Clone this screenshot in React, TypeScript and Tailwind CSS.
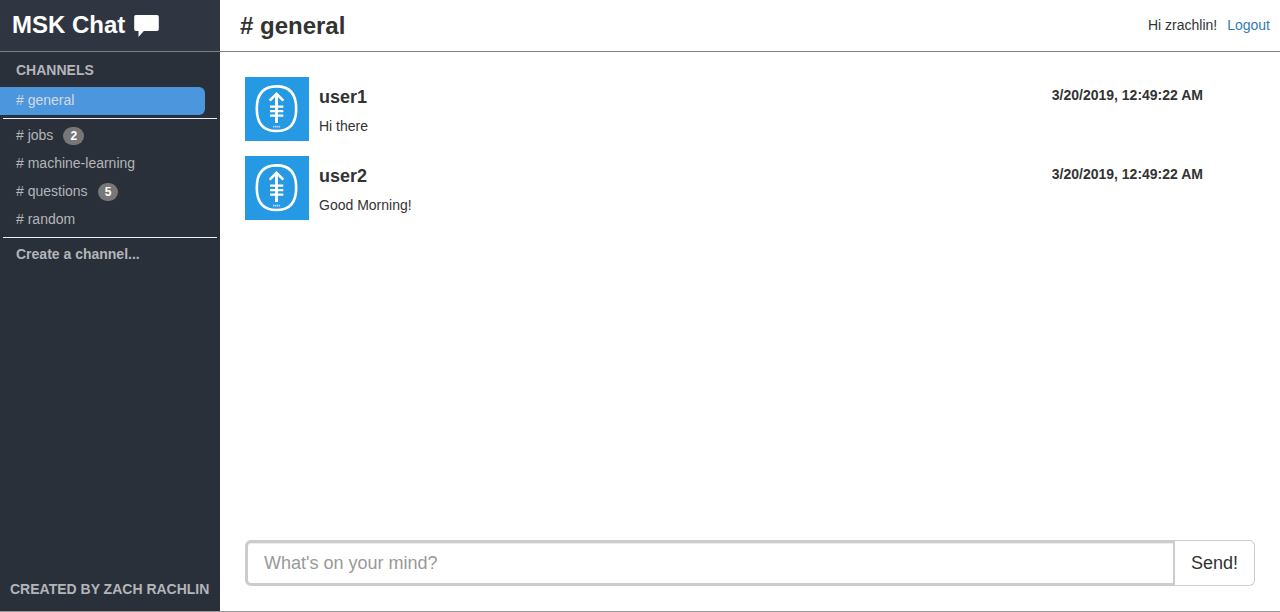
import React from "react";

type Channel = { name: string; unread?: number };
type Message = { user: string; text: string; time: string };

const channels: Channel[] = [
  { name: "jobs", unread: 2 },
  { name: "machine-learning" },
  { name: "questions", unread: 5 },
  { name: "random" },
];

const messages: Message[] = [
  { user: "user1", text: "Hi there", time: "3/20/2019, 12:49:22 AM" },
  { user: "user2", text: "Good Morning!", time: "3/20/2019, 12:49:22 AM" },
];

function Avatar() {
  return (
    <svg viewBox="0 0 64 64" className="size-16 shrink-0 bg-[#2699e4]" aria-hidden="true">
      <g fill="none" stroke="#fff" strokeWidth="2.6">
        <path d="M31.5 9.4C45 9.4 51.2 17 51.2 31.7S45 54 31.5 54 11.8 46.4 11.8 31.7 18 9.4 31.5 9.4Z" />
        <path d="M31.5 17V46" strokeWidth="2.9" />
        <path d="M24.7 23.6L31.5 16.8L38.3 23.6" strokeWidth="2.6" />
        <path d="M25 29.6H38.3M25 34.1H38.3M25 38.6H38.3" strokeWidth="2.1" />
      </g>
      <path d="M28 49.7H35.5" stroke="#b5dcf6" strokeWidth="1.8" strokeDasharray="1.4 0.5" />
    </svg>
  );
}

function ChannelLink({ name, unread }: Channel) {
  return (
    <a href={`#${name}`} className="flex h-7 items-center gap-2.5 px-4 pb-0.5">
      <span># {name}</span>
      {unread !== undefined && (
        <span className="mt-0.5 rounded-[10px] bg-[#777777] px-[7px] py-[3px] text-xs leading-3 font-bold text-white">
          {unread}
        </span>
      )}
    </a>
  );
}

export default function App() {
  return (
    <div className="flex min-h-screen flex-col border-b border-[#999999] bg-white font-['Liberation_Sans',Arial,sans-serif] text-sm leading-5 text-[#333333]">
      <header className="flex h-[52px] border-b border-[#808080]">
        <div className="flex w-[220px] shrink-0 items-center gap-2 bg-[#303641] pb-0.5 pl-3 text-white">
          <h1 className="text-2xl leading-7 font-bold">MSK Chat</h1>
          <svg viewBox="-1 0 26 23" className="mt-1 h-[23px] w-[26px]" aria-hidden="true">
            <path
              fill="#fff"
              d="M1.8 0H23Q24.8 0 24.8 1.8V14.2Q24.8 16 23 16H9.8L4.5 22V16H1.8Q0.2 16 0.2 14.2V1.8Q0.2 0 1.8 0Z"
            />
          </svg>
        </div>
        <div className="flex grow items-center justify-between pr-2.5 pb-0.5 pl-5">
          <h2 className="pt-0.5 text-2xl leading-7 font-bold"># general</h2>
          <p className="flex gap-2.5">
            <span>Hi zrachlin!</span>
            <a href="#logout" className="text-[#337ab7]">Logout</a>
          </p>
        </div>
      </header>

      <div className="flex grow">
        <nav className="flex w-[220px] shrink-0 flex-col bg-[#2a303a] text-[#b3b5b9]">
          <h3 className="px-4 pt-2 pb-[7px] font-bold">CHANNELS</h3>
          <a
            href="#general"
            className="mr-[15px] flex h-7 items-center rounded-r-md bg-[#4c96dd] px-4 pb-0.5 text-[#d5dae0]"
          >
            # general
          </a>
          <hr className="mx-[3px] my-[3px] border-[#eeeeee]" />
          {channels.map((c) => (
            <ChannelLink key={c.name} {...c} />
          ))}
          <hr className="mx-[3px] my-[3px] border-[#eeeeee]" />
          <button type="button" className="flex h-7 items-center px-4 pb-0.5 font-bold">
            Create a channel...
          </button>
          <p className="mt-auto px-2.5 pb-3 font-bold whitespace-nowrap">CREATED BY ZACH RACHLIN</p>
        </nav>

        <main className="flex grow flex-col justify-between p-[25px]">
          <ul className="flex flex-col gap-[15px]">
            {messages.map((m) => (
              <li key={m.user} className="flex gap-2.5 pr-[52px]">
                <Avatar />
                <div className="grow pt-2.5">
                  <h4 className="text-lg leading-5 font-bold">{m.user}</h4>
                  <p className="mt-[9px]">{m.text}</p>
                </div>
                <time className="pt-2 font-bold">{m.time}</time>
              </li>
            ))}
          </ul>
          <form className="flex h-[46px]" onSubmit={(e) => e.preventDefault()}>
            <input
              type="text"
              aria-label="Message"
              placeholder="What's on your mind?"
              className="min-w-0 grow rounded-l-md border-[3px] border-r-2 border-[#cccccc] px-4 text-lg shadow-[inset_0_1px_1px_rgba(0,0,0,0.075)] outline-none placeholder:text-[#999999]"
            />
            <button
              type="submit"
              className="rounded-r-md border border-l-0 border-[#cccccc] px-4 text-lg"
            >
              Send!
            </button>
          </form>
        </main>
      </div>
    </div>
  );
}
